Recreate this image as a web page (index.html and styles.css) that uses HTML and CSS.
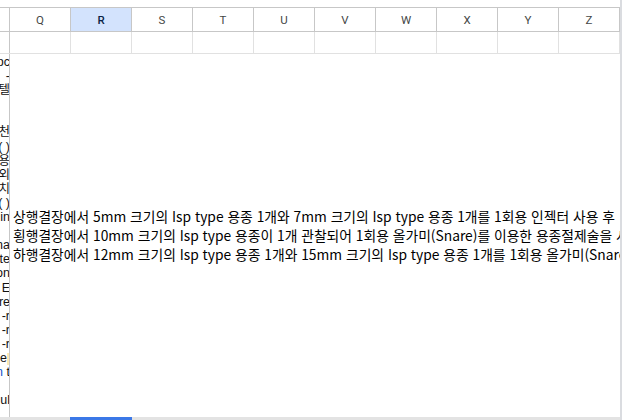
FILE: index.html
```html
<!DOCTYPE html>
<html lang="ko">
<head>
<meta charset="utf-8">
<link rel="stylesheet" href="styles.css">
</head>
<body>
<div class="app">
  <div class="sheet">
    <div class="top-gap"></div>
    <div class="row header-row">
      <div class="corner"></div>
      <div class="hcell">Q</div>
      <div class="hcell selected">R</div>
      <div class="hcell">S</div>
      <div class="hcell">T</div>
      <div class="hcell">U</div>
      <div class="hcell">V</div>
      <div class="hcell">W</div>
      <div class="hcell">X</div>
      <div class="hcell">Y</div>
      <div class="hcell">Z</div>
    </div>
    <div class="row row-two">
      <div class="corner blank"></div>
      <div class="cell"></div>
      <div class="cell"></div>
      <div class="cell"></div>
      <div class="cell"></div>
      <div class="cell"></div>
      <div class="cell"></div>
      <div class="cell"></div>
      <div class="cell"></div>
      <div class="cell"></div>
      <div class="cell"></div>
    </div>
    <div class="row big-row">
      <div class="frag-col">
        <div class="frag"><span>pc</span></div>
        <div class="frag"><span>-</span></div>
        <div class="frag"><span>텔</span></div>
        <div class="frag"></div>
        <div class="frag"></div>
        <div class="frag"><span>천</span></div>
        <div class="frag"><span>(<b class="blue"> </b>)</span></div>
        <div class="frag"><span>용</span></div>
        <div class="frag"><span>외</span></div>
        <div class="frag"><span>치</span></div>
        <div class="frag"><span>(<b class="blue"> </b>)</span></div>
        <div class="frag"><span>in</span></div>
        <div class="frag"></div>
        <div class="frag"><span>na</span></div>
        <div class="frag"><span>te</span></div>
        <div class="frag"><span>on</span></div>
        <div class="frag"><span>E</span></div>
        <div class="frag"><span>re</span></div>
        <div class="frag"><span>-r</span></div>
        <div class="frag"><span>-r</span></div>
        <div class="frag"><span>-r</span></div>
        <div class="frag"><span>e<i class="hl"></i></span></div>
        <div class="frag"><span><b class="blue">n</b> t</span></div>
        <div class="frag"></div>
        <div class="frag"><span>ul</span></div>
      </div>
      <div class="content">
        <p class="note">상행결장에서 5mm 크기의 Isp type 용종 1개와 7mm 크기의 Isp type 용종 1개를 1회용 인젝터 사용 후 <br>횡행결장에서 10mm 크기의 Isp type 용종이 1개 관찰되어 1회용 올가미(Snare)를 이용한 용종절제술을 시행<br>하행결장에서 12mm 크기의 Isp type 용종 1개와 15mm 크기의 Isp type 용종 1개를 1회용 올가미(Snare)를 이용</p>
      </div>
    </div>
    <div class="scrollbar">
      <div class="thumb-gap"></div>
      <div class="thumb"></div>
    </div>
  </div>
  <div class="vscroll"></div>
</div>
</body>
</html>
```
FILE: styles.css
```css
html, body {
  margin: 0;
  padding: 0;
  background: #ffffff;
  overflow: hidden;
}

.app {
  width: 622px;
  height: 420px;
  display: flex;
  overflow: hidden;
}

.sheet {
  width: 620px;
  height: 420px;
  display: flex;
  flex-direction: column;
  overflow: hidden;
}

.vscroll {
  width: 2px;
  height: 420px;
  background: #dadce0;
}

.top-gap {
  height: 7px;
  flex: none;
}

.row {
  display: flex;
  flex: none;
}

.header-row {
  border-top: 1px solid #c7c7c7;
  border-bottom: 1px solid #c7c7c7;
  box-sizing: border-box;
  height: 25px;
  font-family: Roboto, "Liberation Sans", Arial, sans-serif;
  font-size: 11.5px;
  color: #444746;
}

.corner {
  width: 10px;
  flex: none;
  border-right: 1px solid #c7c7c7;
  box-sizing: border-box;
}

.hcell {
  width: 61px;
  flex: none;
  box-sizing: border-box;
  border-right: 1px solid #c7c7c7;
  display: flex;
  align-items: center;
  justify-content: center;
}

.hcell.selected {
  background: #d3e3fd;
  color: #0b1f45;
  font-weight: 500;
}

.row-two {
  height: 22px;
  border-bottom: 1px solid #e1e1e1;
  box-sizing: border-box;
}

.cell {
  width: 61px;
  flex: none;
  box-sizing: border-box;
  border-right: 1px solid #e1e1e1;
}

.big-row {
  flex: 1;
  min-height: 0;
}

.frag-col {
  width: 10px;
  flex: none;
  box-sizing: border-box;
  border-right: 1px solid #c7c7c7;
  padding-top: 1px;
  overflow: hidden;
  font-family: "Liberation Sans", "Noto Sans CJK KR", sans-serif;
  font-size: 12.5px;
  color: #111;
}

.frag {
  height: 14.1px;
  line-height: 14.1px;
  display: flex;
  justify-content: flex-end;
  white-space: nowrap;
  overflow: hidden;
}

.frag span {
  display: block;
  margin-right: -1px;
  white-space: pre;
}

.blue {
  color: #1155cc;
  font-weight: normal;
}

.hl {
  display: inline-block;
  width: 3px;
  height: 12px;
  background: #fce8b2;
  vertical-align: middle;
}

.content {
  flex: 1;
  min-width: 0;
  overflow: hidden;
  display: flex;
  align-items: center;
  padding-left: 3px;
}

.note {
  margin: 0;
  white-space: nowrap;
  font-family: "Noto Sans CJK KR", "Liberation Sans", sans-serif;
  font-size: 13.8px;
  line-height: 19px;
  color: #000;
}

.scrollbar {
  height: 3px;
  flex: none;
  display: flex;
  background: #e3e3e3;
}

.thumb-gap {
  width: 70px;
  flex: none;
}

.thumb {
  width: 62px;
  flex: none;
  background: #3b78e7;
}
```
